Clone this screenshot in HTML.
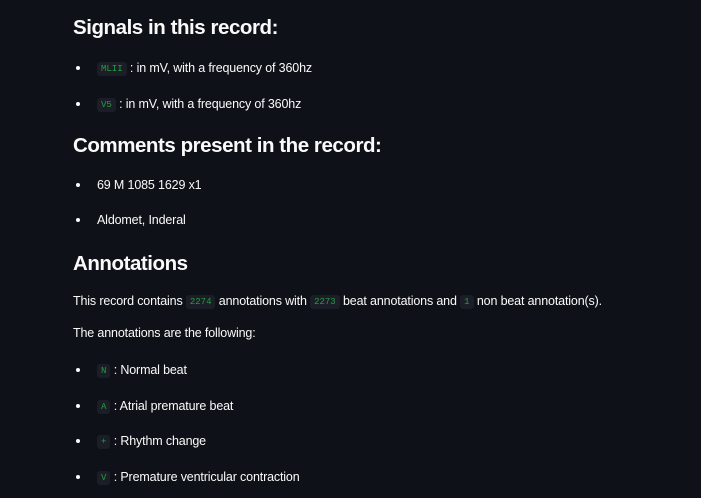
<!DOCTYPE html>
<html><head><meta charset="utf-8"><style>
html,body{margin:0;padding:0;background:#0e1117;width:701px;height:498px;overflow:hidden}
body{font-family:"Liberation Sans",sans-serif;color:#fafafa;position:relative}
.h{position:absolute;left:73px;font-size:20.5px;font-weight:bold;letter-spacing:-0.45px;line-height:24px}
.t{position:absolute;left:73px;font-size:12.5px;letter-spacing:-0.15px;line-height:16px;white-space:nowrap}
.li{left:97px}
.li::before{content:"";position:absolute;left:-21px;top:6px;width:4px;height:4px;border-radius:50%;background:#fafafa}
code{font-family:"Liberation Mono",monospace;font-size:9px;color:#21a040;background:#1b1e26;padding:2px 4px;border-radius:3px;letter-spacing:0;position:relative;top:-1px}
</style></head><body>
<div class="h" style="top:16px">Signals in this record:</div>
<div class="t li" style="top:60px"><code>MLII</code> : in mV, with a frequency of 360hz</div>
<div class="t li" style="top:96px"><code>V5</code> : in mV, with a frequency of 360hz</div>
<div class="h" style="top:134px">Comments present in the record:</div>
<div class="t li" style="top:177px">69 M 1085 1629 x1</div>
<div class="t li" style="top:212px">Aldomet, Inderal</div>
<div class="h" style="top:252px">Annotations</div>
<div class="t" style="top:293px">This record contains <code>2274</code> annotations with <code>2273</code> beat annotations and <code>1</code> non beat annotation(s).</div>
<div class="t" style="top:325px">The annotations are the following:</div>
<div class="t li" style="top:362px"><code>N</code> : Normal beat</div>
<div class="t li" style="top:398px"><code>A</code> : Atrial premature beat</div>
<div class="t li" style="top:433px"><code>+</code> : Rhythm change</div>
<div class="t li" style="top:469px"><code>V</code> : Premature ventricular contraction</div>
</body></html>
